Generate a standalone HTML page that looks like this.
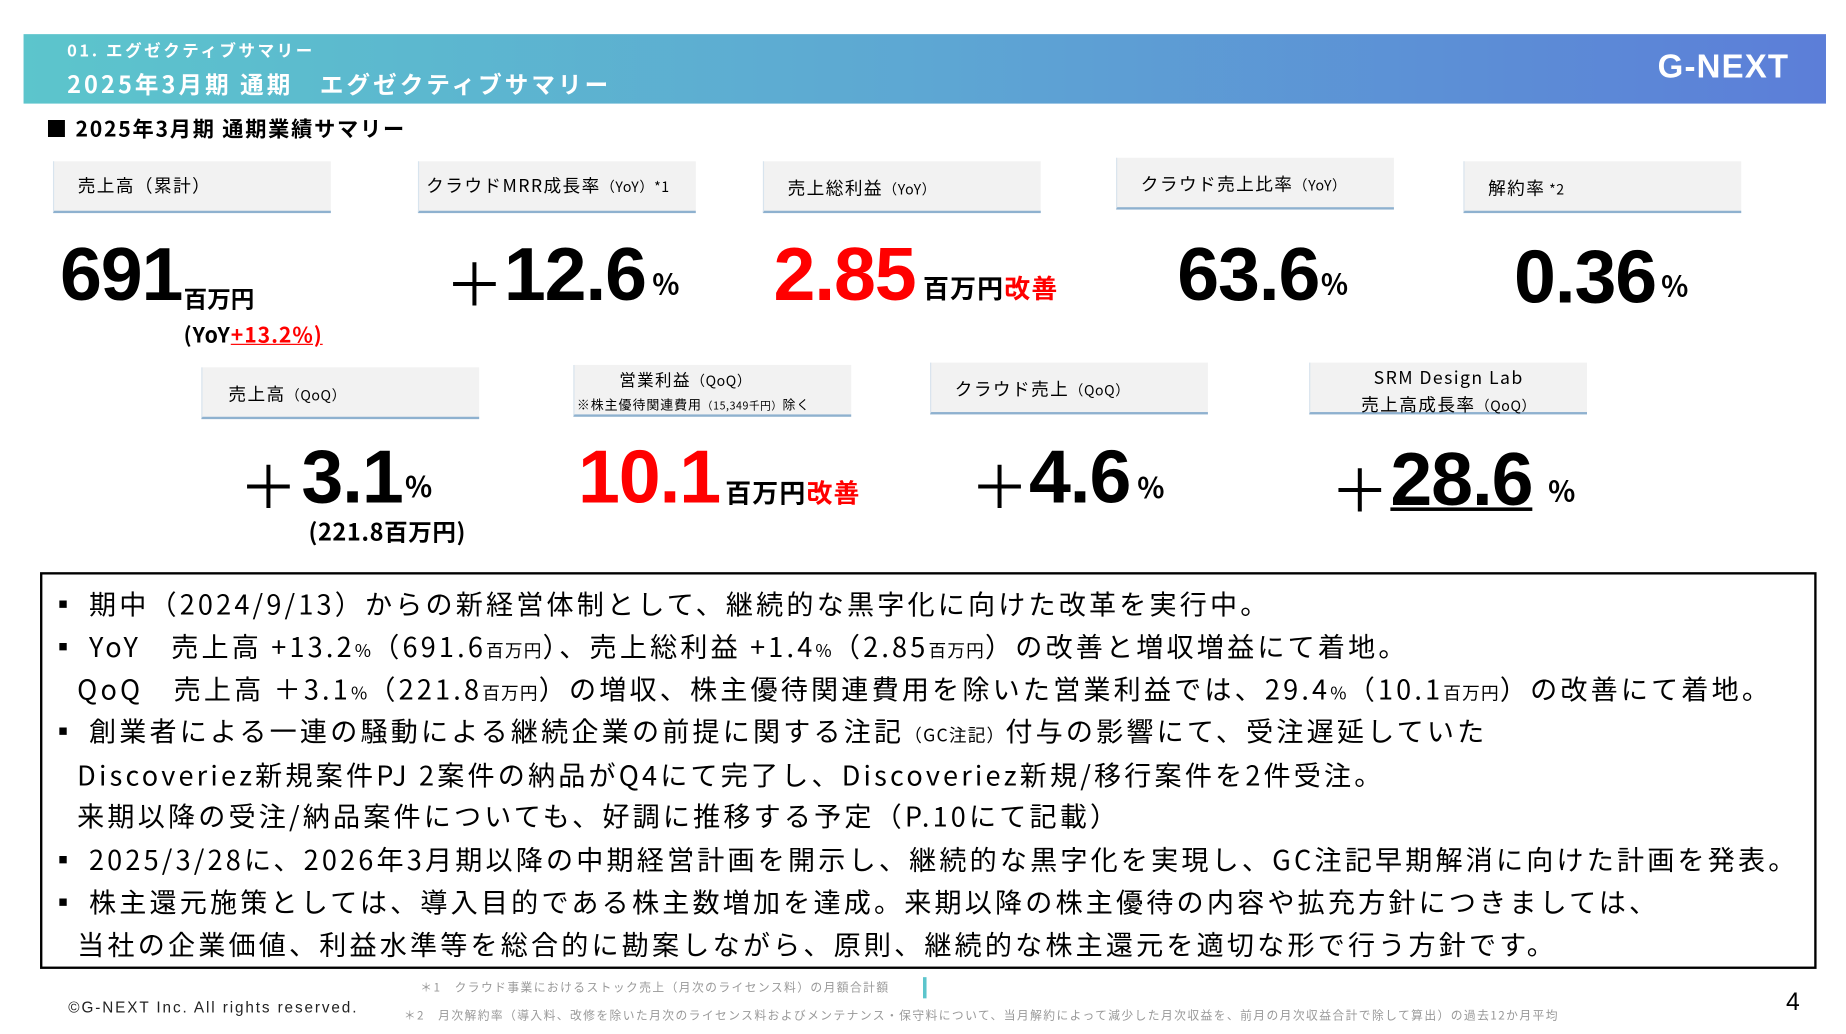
<!DOCTYPE html>
<html><head><meta charset="utf-8"><style>
html,body{margin:0;padding:0;background:#fff;overflow:hidden}
body{width:1846px;height:1034px;position:relative}
#s{position:absolute;left:0;top:0;width:1568px;height:879px;transform:scale(1.17730);transform-origin:0 0;font-family:"Liberation Sans","Noto Sans CJK JP",sans-serif;color:#000}
.a{position:absolute;white-space:nowrap}
.ban{left:20px;top:29px;width:1531px;height:59px;background:linear-gradient(90deg,#5cc5cc,#5da7d3 50%,#5c7ed8)}
.lb{position:absolute;width:236px;height:44px;background:#f2f2f2;border-bottom:2px solid #8eb1cf;border-left:1px solid #d8e4ee;font-size:15px;box-sizing:border-box;font-family:"Noto Sans CJK JP",sans-serif;letter-spacing:1.2px}
.lb span{font-size:12px;letter-spacing:0.5px}
.num{font-weight:bold;letter-spacing:-1px}
.red{color:#f00}
.u{font-weight:bold;font-family:"Noto Sans CJK JP",sans-serif}
.box{left:34px;top:486px;width:1509px;height:337px;border:2px solid #000;box-sizing:border-box}
.ln{position:absolute;left:42px;font-size:23px;font-family:"Noto Sans CJK JP",sans-serif;white-space:nowrap;line-height:30px;letter-spacing:2.7px}
.ln small{font-size:15px;letter-spacing:1px}
.ln b{font-weight:normal;margin-right:-4px}
</style></head><body><div id="s">
<div class="a ban"></div>
<div class="a" style="left:57px;top:33px;font-size:14px;color:#fff;font-weight:bold;font-family:'Noto Sans CJK JP',sans-serif;letter-spacing:2.2px">01.&nbsp;エグゼクティブサマリー</div>
<div class="a" style="left:57px;top:56px;font-size:20px;color:#fff;font-weight:bold;font-family:'Noto Sans CJK JP',sans-serif;letter-spacing:2.6px">2025年3月期 通期　エグゼクティブサマリー</div>
<div class="a" style="left:1408px;top:41px;font-size:28px;color:#fff;font-weight:bold;letter-spacing:1px">G-NEXT</div>
<div class="a" style="left:39px;top:96px;font-size:18px;font-weight:bold;font-family:'Noto Sans CJK JP',sans-serif;letter-spacing:1.5px">■ 2025年3月期 通期業績サマリー</div>

<div class="lb" style="left:45px;top:137px;padding:10px 0 0 20px">売上高（累計）</div>
<div class="lb" style="left:355px;top:137px;padding:10px 0 0 6px">クラウドMRR成長率<span>（YoY）*1</span></div>
<div class="lb" style="left:648px;top:137px;padding:12px 0 0 20px">売上総利益<span>（YoY）</span></div>
<div class="lb" style="left:948px;top:134px;padding:12px 0 0 20px">クラウド売上比率<span>（YoY）</span></div>
<div class="lb" style="left:1243px;top:137px;padding:12px 0 0 20px">解約率<span> *2</span></div>

<div class="a num" style="left:51px;top:196px;font-size:64px">691</div>
<div class="a u" style="left:156px;top:238px;font-size:20px">百万円</div>
<div class="a u" style="left:156px;top:271px;font-size:18px;letter-spacing:0.8px">(YoY<span class="red" style="text-decoration:underline">+13.2%)</span></div>
<div class="a" style="left:378px;top:203px;font-size:50px">＋</div>
<div class="a num" style="left:428px;top:196px;font-size:64px">12.6</div>
<div class="a u" style="left:554px;top:222px;font-size:24px">%</div>
<div class="a num red" style="left:657px;top:196px;font-size:64px">2.85</div>
<div class="a u" style="left:784px;top:228px;font-size:22px;letter-spacing:1px">百万円<span class="red">改善</span></div>
<div class="a num" style="left:1000px;top:196px;font-size:64px">63.6</div>
<div class="a u" style="left:1122px;top:222px;font-size:24px">%</div>
<div class="a num" style="left:1286px;top:198px;font-size:64px">0.36</div>
<div class="a u" style="left:1411px;top:224px;font-size:24px">%</div>

<div class="lb" style="left:171px;top:312px;padding:12px 0 0 22px">売上高<span>（QoQ）</span></div>
<div class="lb" style="left:487px;top:310px;padding:3px 0 0 0;font-size:14px;line-height:20px"><div style="padding-left:38px">営業利益<span>（QoQ）</span></div><div style="font-size:11px;padding-left:2px;letter-spacing:0.8px">※株主優待関連費用<span style="font-size:9px">（15,349千円）</span>除く</div></div>
<div class="lb" style="left:790px;top:308px;padding:12px 0 0 20px">クラウド売上<span>（QoQ）</span></div>
<div class="lb" style="left:1112px;top:308px;padding:1px 0 0 0;text-align:center;line-height:23px;font-size:15px"><div>SRM Design Lab</div><div>売上高成長率<span>（QoQ）</span></div></div>

<div class="a" style="left:203px;top:375px;font-size:50px">＋</div>
<div class="a num" style="left:256px;top:368px;font-size:64px">3.1</div>
<div class="a u" style="left:344px;top:394px;font-size:24px">%</div>
<div class="a u" style="left:262px;top:436px;font-size:20px;letter-spacing:0.5px">(221.8百万円)</div>
<div class="a num red" style="left:491px;top:368px;font-size:64px">10.1</div>
<div class="a u" style="left:616px;top:402px;font-size:22px;letter-spacing:1px">百万円<span class="red">改善</span></div>
<div class="a" style="left:824px;top:375px;font-size:50px">＋</div>
<div class="a num" style="left:874px;top:368px;font-size:64px">4.6</div>
<div class="a u" style="left:966px;top:395px;font-size:24px">%</div>
<div class="a" style="left:1130px;top:378px;font-size:50px">＋</div>
<div class="a num" style="left:1181px;top:370px;font-size:64px;text-decoration:underline;text-decoration-thickness:3px">28.6</div>
<div class="a u" style="left:1315px;top:398px;font-size:24px">%</div>

<div class="a box"></div>
<div class="ln" style="top:497px">▪ 期中（2024/9/13）からの新経営体制として、継続的な黒字化に向けた改革を実行中。</div>
<div class="ln" style="top:533px">▪ YoY　売上高 +13.2<small>%</small>（691.6<small>百万円</small>）、売上総利益 +1.4<small>%</small>（2.85<small>百万円</small>）の改善と増収増益にて着地。</div>
<div class="ln" style="top:569px">&nbsp;&nbsp;&nbsp;QoQ　売上高 ＋3.1<small>%</small>（221.8<small>百万円</small>）の増収、株主優待関連費用を除いた営業利益では、29.4<small>%</small>（10.1<small>百万円</small>）の改善にて着地。</div>
<div class="ln" style="top:605px">▪ 創業者による一連の騒動による継続企業の前提に関する注記<small>（GC注記）</small>付与の影響にて、受注遅延していた</div>
<div class="ln" style="top:642px">&nbsp;&nbsp;&nbsp;Discoveriez新規案件PJ 2案件の納品がQ4にて完了し、Discoveriez新規/移行案件を2件受注。</div>
<div class="ln" style="top:677px">&nbsp;&nbsp;&nbsp;来期以降の受注/納品案件についても、好調に推移する予定（P.10にて記載）</div>
<div class="ln" style="top:714px">▪ 2025/3/28に、2026年3月期以降の中期経営計画を開示し、継続的な黒字化を実現し、GC注記早期解消に向けた計画を発表。</div>
<div class="ln" style="top:750px">▪ 株主還元施策としては、導入目的である株主数増加を達成。来期以降の株主優待の内容や拡充方針につきましては、</div>
<div class="ln" style="top:786px">&nbsp;&nbsp;&nbsp;当社の企業価値、利益水準等を総合的に勘案しながら、原則、継続的な株主還元を適切な形で行う方針です。</div>

<div class="a" style="left:357px;top:830px;font-size:10px;color:#999;font-family:'Noto Sans CJK JP',sans-serif;letter-spacing:1.2px">＊1　クラウド事業におけるストック売上（月次のライセンス料）の月額合計額</div>
<div class="a" style="left:784px;top:830px;width:3px;height:18px;background:#5cc5cc"></div>
<div class="a" style="left:343px;top:854px;font-size:10px;color:#999;font-family:'Noto Sans CJK JP',sans-serif;letter-spacing:1.2px">＊2　月次解約率（導入料、改修を除いた月次のライセンス料およびメンテナンス・保守料について、当月解約によって減少した月次収益を、前月の月次収益合計で除して算出）の過去12か月平均</div>
<div class="a" style="left:58px;top:848px;font-size:13px;color:#222;letter-spacing:1.6px">©G-NEXT Inc. All rights reserved.</div>
<div class="a" style="left:1517px;top:840px;font-size:21px">4</div>
</div></body></html>
